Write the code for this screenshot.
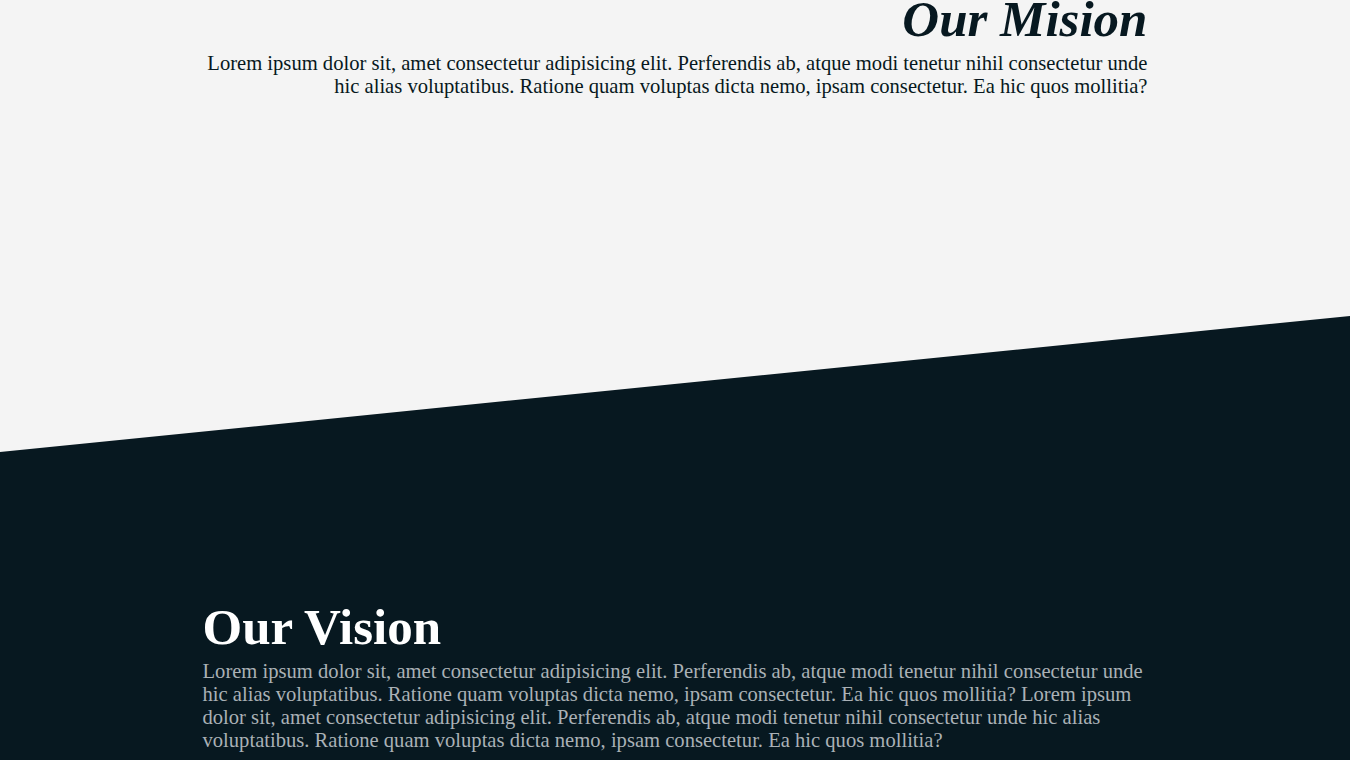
import React from 'react';

const LOREM =
  'Lorem ipsum dolor sit, amet consectetur adipisicing elit. Perferendis ab, atque modi tenetur nihil consectetur unde hic alias voluptatibus. Ratione quam voluptas dicta nemo, ipsam consectetur. Ea hic quos mollitia?';

export default function App() {
  return (
    <div className="min-h-screen bg-[#f4f4f4] font-['Liberation_Serif',_'Times_New_Roman',_serif] overflow-hidden">
      {/* Mission */}
      <section className="h-[316px] flow-root">
        <div className="w-[70%] mx-auto text-right text-[#071820] -mt-[8px]">
          <h2 className="text-[51px] font-bold italic leading-[55px]">Our Mision</h2>
          <p className="text-[20.6px] leading-[23px] mt-[5px]">{LOREM}</p>
        </div>
      </section>

      {/* Vision */}
      <section className="bg-[#071820] [clip-path:polygon(0_136px,100%_0,100%_100%,0_100%)] pt-[284px] pb-[40px]">
        <div className="w-[70%] mx-auto text-left">
          <h2 className="text-[51px] font-bold text-white leading-[55px]">Our Vision</h2>
          <p className="text-[20.6px] leading-[23px] text-[#aab1b6] mt-[5px]">
            {LOREM} {LOREM}
          </p>
        </div>
      </section>
    </div>
  );
}
